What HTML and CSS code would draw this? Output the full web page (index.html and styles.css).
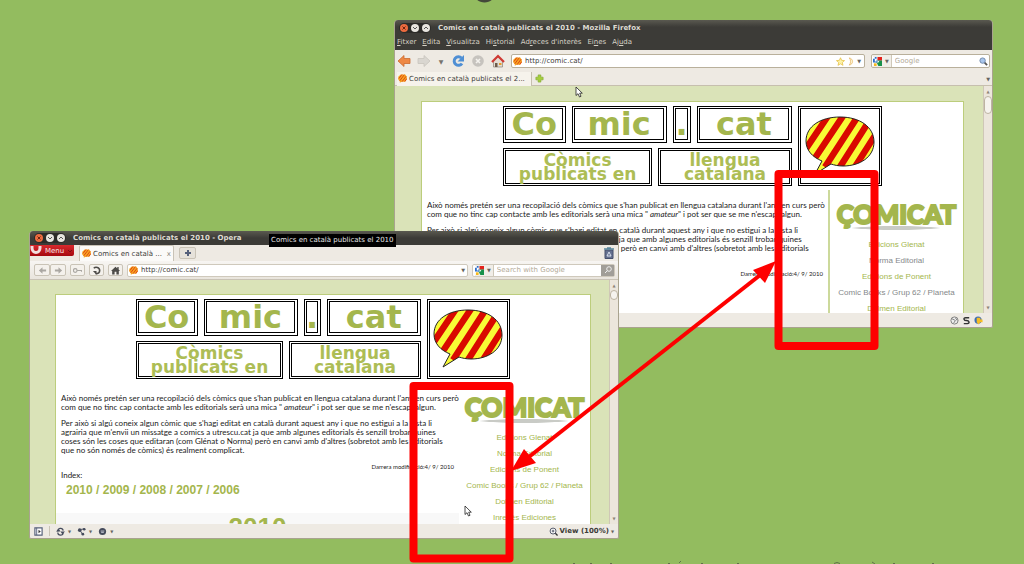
FILE: index.html
```html
<!DOCTYPE html>
<html lang="ca">
<head>
<meta charset="utf-8">
<title>Comics en català publicats el 2010</title>
<link rel="stylesheet" href="styles.css">
</head>
<body>
<svg class="defs" aria-hidden="true">
  <defs>
    <clipPath id="bubble-clip"><path d="M35 1C55 1 69 11 69 26C69 41 55 50 38 50C33 50 29 49 26 48L10 58L17 45C7 41 1 34 1 25C1 10 16 1 35 1Z"/></clipPath>
    <symbol id="bubble" viewBox="0 0 70 60">
      <g clip-path="url(#bubble-clip)">
        <rect width="70" height="60" fill="#f8fb35"/>
        <path d="M25-3L-4 40M40-3L6 48M55-3L20 51M66 2L33 54M76 10L48 54" stroke="#d90900" stroke-width="6.500"/>
      </g>
      <path d="M35 1C55 1 69 11 69 26C69 41 55 50 38 50C33 50 29 49 26 48L10 58L17 45C7 41 1 34 1 25C1 10 16 1 35 1Z" fill="none" stroke="#222" stroke-width="1"/>
    </symbol>
    <symbol id="fav" viewBox="0 0 10 10">
      <path d="M3 .5H8L9.800 3V6L8 8.500H4L2 9.800V8L.3 6V3Z" fill="#f5a81c"/>
      <path d="M4.500.5L1 5M7 .8L2 7.500M9 2.500L4.500 8.500M9.800 5L7.500 8.300" stroke="#e0401c" stroke-width="1.100"/>
    </symbol>
    <symbol id="google" viewBox="0 0 10 10">
      <path d="M0 0H4V10H0Z" fill="#fff"/><path d="M5 0H10V4H5Z" fill="#e3221c"/><path d="M5 4H10V10H6L4 6Z" fill="#17914a"/>
      <path d="M2 0H4V2H2ZM0 2H2V5H4V3H5V6H0Z" fill="#2f6fc9"/><path d="M1 7H4V10H1Z" fill="#f6b91d"/><path d="M5 4L7 5L5 7Z" fill="#fff"/>
    </symbol>
    <symbol id="lens" viewBox="0 0 10 10"><path d="M6 6L9 9" stroke="#555" stroke-width="2"/><circle cx="4" cy="4" r="3" fill="#a9c6ec" stroke="#6d86a8"/></symbol>
    <symbol id="pointer" viewBox="0 0 8 12"><path d="M1 1V9.500L3 7.700L4.500 11L6 10.300L4.700 7.200H7.300Z" fill="#fff" stroke="#222" stroke-width=".8"/></symbol>
  </defs>
</svg>

<main class="desktop">
  <section class="window firefox" aria-label="Mozilla Firefox">
    <header class="chrome-top">
      <div class="titlebar">
        <span class="controls"><button class="dot close" aria-label="Tanca"><svg viewBox="0 0 8 8"><path d="M2.500 2.500L5.500 5.500M5.500 2.500L2.500 5.500"/></svg></button><button class="dot" aria-label="Minimitza"><svg viewBox="0 0 8 8"><path d="M2 3L4 5L6 3"/></svg></button><button class="dot" aria-label="Maximitza"><svg viewBox="0 0 8 8"><path d="M2 5L4 3L6 5"/></svg></button></span>
        <h1 class="title">Comics en català publicats el 2010 - Mozilla Firefox</h1>
      </div>
      <nav class="menubar">
        <a href="#"><u>F</u>itxer</a><a href="#"><u>E</u>dita</a><a href="#"><u>V</u>isualitza</a><a href="#">Hi<u>s</u>torial</a><a href="#">Ad<u>r</u>eces d'interès</a><a href="#">Ei<u>n</u>es</a><a href="#">Aj<u>u</u>da</a>
      </nav>
    </header>
    <div class="toolbar">
      <button class="tool" aria-label="Enrere"><svg viewBox="0 0 14 14"><path d="M1 7L7 1.500V4.500H13V9.500H7V12.500Z" fill="#ee8843" stroke="#c9692f" stroke-width=".8"/></svg></button>
      <button class="tool" aria-label="Endavant"><svg viewBox="0 0 14 14"><path d="M13 7L7 1.500V4.500H1V9.500H7V12.500Z" fill="#d9d6d0" stroke="#c8c4bd" stroke-width=".8"/></svg></button>
      <button class="tool small" aria-label="Historial recent">▼</button>
      <button class="tool" aria-label="Recarrega"><svg viewBox="0 0 14 14"><path d="M10.500 4A4.300 4.300 0 1 0 11 9.500" fill="none" stroke="#4f8fd4" stroke-width="3"/><path d="M13 1V7.500H6.500Z" fill="#4f8fd4"/></svg></button>
      <button class="tool" aria-label="Atura"><svg viewBox="0 0 14 14"><circle cx="7" cy="7" r="5.800" fill="#c6c3be"/><path d="M5 5L9 9M9 5L5 9" stroke="#f4f2ee" stroke-width="1.600"/></svg></button>
      <button class="tool" aria-label="Inici"><svg viewBox="0 0 14 14"><path d="M2.500 7V13H11.500V7L7 3Z" fill="#e4ddd2" stroke="#8a8176" stroke-width=".7"/><path d="M1 8L7 2L13 8" fill="none" stroke="#cf3a34" stroke-width="2.200"/><path d="M4 9H6.500V13H4Z" fill="#6d5b4b"/><path d="M8 9H10.500V11H8Z" fill="#e79a2d"/></svg></button>
      <div class="field address">
        <svg class="ico"><use href="#fav"/></svg>
        <input aria-label="Adreça" value="http://comic.cat/">
        <svg class="ico" viewBox="0 0 10 10"><path d="M5 .8L6.300 3.700L9.500 4L7 6.200L7.800 9.300L5 7.600L2.200 9.300L3 6.200L.5 4L3.700 3.700Z" fill="#fdf3a8" stroke="#e3bc3e" stroke-width=".8"/></svg>
        <svg class="ico thin" viewBox="0 0 6 10"><path d="M1 1C6 2 6 8 1 9C3 7 3 3 1 1Z" fill="#fff4d0" stroke="#e3b25e" stroke-width=".8"/></svg>
        <span class="arrow">▼</span>
      </div>
      <div class="field search">
        <span class="engine"><svg class="ico"><use href="#google"/></svg><span class="arrow">▼</span></span>
        <input aria-label="Cerca" placeholder="Google">
        <svg class="ico"><use href="#lens"/></svg>
      </div>
    </div>
    <div class="tabs">
      <button class="tab"><svg class="ico"><use href="#fav"/></svg>Comics en català publicats el 2...</button>
      <button class="newtab" aria-label="Pestanya nova"><svg class="ico" viewBox="0 0 10 10"><path d="M3.500 1H6.500V3.500H9V6.500H6.500V9H3.500V6.500H1V3.500H3.500Z" fill="#a5cf3c" stroke="#7fa82c" stroke-width=".7"/></svg></button>
      <span class="arrow end">▼</span>
    </div>
    <div class="view">
      <div class="canvas">
        <article class="page">
          <div class="logo">
            <div class="row top"><b class="box">Co</b><b class="box">mic</b><b class="box">.</b><b class="box">cat</b></div>
            <div class="row sub"><b class="box">Còmics<br>publicats en</b><b class="box">llengua<br>catalana</b></div>
            <div class="box pic"><svg><use href="#bubble"/></svg></div>
          </div>
          <div class="cols">
            <div class="text">
              <p>Això només pretén ser una recopilació dels còmics que s'han publicat en llengua catalana durant l'any en curs però<br>com que no tinc cap contacte amb les editorials serà una mica " <i>amateur</i>" i pot ser que se me n'escapi algun.</p>
              <p>Per això si algú coneix algun còmic que s'hagi editat en català durant aquest any i que no estigui a la llista li<br>agrairia que m'envii un missatge a comics a utrescu.cat ja que amb algunes editorials és senzill trobar quines<br>coses són les coses que editaran (com Glénat o Norma) però en canvi amb d'altres (sobretot amb les editorials<br>que no són només de còmics) és realment complicat.</p>
              <p class="date">Darrera modificació:4/ 9/ 2010</p>
            </div>
            <aside class="side">
              <div class="brand">ÇOMICAT</div>
              <a href="#">Edicions Glenat</a><a class="seen" href="#">Norma Editorial</a><a href="#">Edicions de Ponent</a><a class="seen" href="#">Comic Books / Grup 62 / Planeta</a><a href="#">Dolmen Editorial</a>
            </aside>
          </div>
        </article>
      </div>
      <div class="scroll"><span>▲</span><i class="thumb"></i><span class="down">▼</span></div>
    </div>
    <footer class="status right">
      <svg class="ico" viewBox="0 0 10 10"><circle cx="5" cy="5" r="4" fill="#eee" stroke="#777"/><path d="M2 3L6 5L4 8M6 2L8 5" fill="none" stroke="#777"/></svg>
      <svg class="ico" viewBox="0 0 10 10"><path d="M8 2H4C1 2 2 5 5 5S9 8 6 8.500H2" fill="none" stroke="#333" stroke-width="1.600"/></svg>
      <svg class="ico" viewBox="0 0 10 10"><circle cx="4.500" cy="4.500" r="4" fill="#3d6fb5"/><path d="M3 2H7V4H9.500V7H7L5 9.500L3 7Z" fill="#f6bd25"/></svg>
    </footer>
  </section>

  <section class="window opera" aria-label="Opera">
    <header class="chrome-top">
      <div class="titlebar">
        <span class="controls"><button class="dot close" aria-label="Tanca"><svg viewBox="0 0 8 8"><path d="M2.500 2.500L5.500 5.500M5.500 2.500L2.500 5.500"/></svg></button><button class="dot" aria-label="Minimitza"><svg viewBox="0 0 8 8"><path d="M2 3L4 5L6 3"/></svg></button><button class="dot" aria-label="Maximitza"><svg viewBox="0 0 8 8"><path d="M2 5L4 3L6 5"/></svg></button></span>
        <h1 class="title">Comics en català publicats el 2010 - Opera</h1>
      </div>
    </header>
    <div class="tabs">
      <button class="menu"><svg viewBox="0 0 12 10"><path d="M2 -2V2A4 4.500 0 0 0 10 2V-2" fill="none" stroke="#f2dede" stroke-width="3"/></svg>Menu<svg class="chev" viewBox="0 0 6 4"><path d="M1 1L3 3L5 1" fill="none" stroke="#7c1015"/></svg></button>
      <button class="tab"><svg class="ico"><use href="#fav"/></svg>Comics en català ...<span class="x">x</span></button>
      <button class="plus" aria-label="Pestanya nova"><svg viewBox="0 0 8 8"><path d="M4 1V7M1 4H7" stroke="#55607a" stroke-width="2"/></svg></button>
      <svg class="trash" viewBox="0 0 10 12"><path d="M1 3H9V11.500H1Z" fill="#64708f" stroke="#444f6b"/><path d="M0 2H10M3 1H7" stroke="#59869c" stroke-width="1.500"/><path d="M3 9L5 5L7 9Z" fill="none" stroke="#d9e0ee"/></svg>
    </div>
    <div class="toolbar">
      <div class="pair"><button class="btn" aria-label="Enrere"><svg viewBox="0 0 10 10"><path d="M1 5L5 1.500V4H9V6H5V8.500Z" fill="#aaa7a2"/></svg></button><button class="btn" aria-label="Endavant"><svg viewBox="0 0 10 10"><path d="M9 5L5 1.500V4H1V6H5V8.500Z" fill="#aaa7a2"/></svg></button></div>
      <button class="btn" aria-label="Clau"><svg viewBox="0 0 10 10"><circle cx="2.500" cy="5" r="2" fill="none" stroke="#aaa7a2" stroke-width="1.300"/><path d="M4.500 5H9.500V6.500" fill="none" stroke="#aaa7a2" stroke-width="1.300"/></svg></button>
      <button class="btn" aria-label="Recarrega"><svg viewBox="0 0 10 10"><path d="M2 2.500C4 .5 8.500 1.500 8.500 5C8.500 8 6 8.500 4 8.500" fill="none" stroke="#4d4b48" stroke-width="1.800"/><path d="M1 5.500H5V9.800Z" fill="#4d4b48"/></svg></button>
      <button class="btn" aria-label="Inici"><svg viewBox="0 0 10 10"><path d="M0 5.500L5 .8L7 2.700V1H8.500V4L10 5.500H8.700V9.500H6V6.500H4V9.500H1.300V5.500Z" fill="#4d4b48"/></svg></button>
      <div class="field address">
        <svg class="ico"><use href="#fav"/></svg>
        <input aria-label="Adreça" value="http://comic.cat/">
        <span class="arrow">▼</span>
      </div>
      <div class="field search">
        <span class="engine"><svg class="ico"><use href="#google"/></svg><span class="arrow">▼</span></span>
        <input aria-label="Cerca" placeholder="Search with Google">
        <button class="go" aria-label="Cerca"><svg viewBox="0 0 10 10"><circle cx="6" cy="4" r="2.300" fill="none" stroke="#eee"/><path d="M4.500 5.500L2 8" stroke="#eee"/></svg></button>
      </div>
    </div>
    <div class="view">
      <div class="canvas">
        <article class="page">
          <div class="logo">
            <div class="row top"><b class="box">Co</b><b class="box">mic</b><b class="box">.</b><b class="box">cat</b></div>
            <div class="row sub"><b class="box">Còmics<br>publicats en</b><b class="box">llengua<br>catalana</b></div>
            <div class="box pic"><svg><use href="#bubble"/></svg></div>
          </div>
          <div class="cols">
            <div class="text">
              <p>Això només pretén ser una recopilació dels còmics que s'han publicat en llengua catalana durant l'any en curs però<br>com que no tinc cap contacte amb les editorials serà una mica " <i>amateur</i>" i pot ser que se me n'escapi algun.</p>
              <p>Per això si algú coneix algun còmic que s'hagi editat en català durant aquest any i que no estigui a la llista li<br>agrairia que m'envii un missatge a comics a utrescu.cat ja que amb algunes editorials és senzill trobar quines<br>coses són les coses que editaran (com Glénat o Norma) però en canvi amb d'altres (sobretot amb les editorials<br>que no són només de còmics) és realment complicat.</p>
              <p class="date">Darrera modificació:4/ 9/ 2010</p>
              <p class="index">Index:</p>
              <p class="years"><a href="#">2010</a> / <a href="#">2009</a> / <a href="#">2008</a> / <a href="#">2007</a> / <a href="#">2006</a></p>
              <h2 class="year">2010</h2>
            </div>
            <aside class="side">
              <div class="brand">ÇOMICAT</div>
              <a href="#">Edicions Glenat</a><a href="#">Norma Editorial</a><a href="#">Edicions de Ponent</a><a href="#">Comic Books / Grup 62 / Planeta</a><a href="#">Dolmen Editorial</a><a href="#">Inrevés Ediciones</a>
            </aside>
          </div>
        </article>
      </div>
      <div class="scroll"><span>▲</span><i class="thumb"></i><span class="down">▼</span></div>
    </div>
    <footer class="status">
      <svg class="ico" viewBox="0 0 10 10"><path d="M1 1H9V9H1Z" fill="#fff" stroke="#56607a" stroke-width="1.300"/><path d="M3 1V9" stroke="#56607a"/><path d="M5 3L7.500 5L5 7Z" fill="#333"/></svg>
      <i class="sep"></i>
      <svg class="ico" viewBox="0 0 10 10"><path d="M0 5L3 2L5 5ZM10 5L7 8L5 5Z" fill="#454b5c"/><path d="M2 5A3 3 0 0 1 8 4M2 6A3 3 0 0 0 8 6" fill="none" stroke="#454b5c" stroke-width="1.300"/></svg><span class="arrow">▼</span>
      <svg class="ico" viewBox="0 0 10 10"><path d="M3 3L8 2M3 3L6 8" stroke="#454b5c"/><circle cx="3" cy="3.500" r="2" fill="#454b5c"/><circle cx="8" cy="2.500" r="1.500" fill="#454b5c"/><circle cx="6.500" cy="8" r="1.500" fill="#454b5c"/></svg><span class="arrow">▼</span>
      <svg class="ico" viewBox="0 0 10 10"><circle cx="5" cy="5" r="4" fill="#454b5c"/><path d="M3 4.500H7M3.500 6H6.500" stroke="#c8ccd8"/></svg><span class="arrow">▼</span>
      <button class="zoom"><svg class="ico" viewBox="0 0 10 10"><path d="M6.500 6.500L9.500 9.500" stroke="#333" stroke-width="1.500"/><circle cx="4.500" cy="4.500" r="3.300" fill="#fff" stroke="#454b5c"/><path d="M3 4.500H6M4.500 3V6" stroke="#454b5c"/></svg>View (100%)<span class="arrow">▼</span></button>
    </footer>
    <span class="tooltip" role="tooltip">Comics en català publicats el 2010</span>
  </section>

  <svg class="marks" viewBox="0 0 1024 564" aria-hidden="true">
    <path d="M476 -2C478 4 491 4 493 -2Z" fill="#43483a"/>
    <path d="M573 563.500h2M590 563.500h2M610 563.500h2M668 563.500h2M679 563l2-2M701 563.500h2M737 563.500h2M834 563.500q3-2 6 0M872 562l3 2M893 563.500h2M932 563.500h2" fill="none" stroke="#5e7048"/>
    <use href="#pointer" x="575" y="86" width="8" height="12"/>
    <use href="#pointer" x="464" y="505" width="8" height="12"/>
    <g fill="none" stroke="#fe0000" stroke-linejoin="round">
      <rect x="778.500" y="174" width="96" height="172" stroke-width="8"/>
      <rect x="413.500" y="386" width="96" height="172.500" stroke-width="8"/>
      <path d="M525 460L764 272" stroke-width="4"/>
    </g>
    <path d="M776 261L753 270L765 283ZM511 471L524 449L536 463Z" fill="#fe0000"/>
  </svg>
</main>
</body>
</html>
```
FILE: styles.css
```css
* { box-sizing: border-box; }
body { margin: 0; background: #93bc5f; font-family: "DejaVu Sans", sans-serif; font-size: 7px; color: #3c3b37; }
button, input { font: inherit; color: inherit; border: 0; padding: 0; margin: 0; background: none; }
button { display: flex; align-items: center; }
a { color: inherit; text-decoration: none; }
h1, h2, p { margin: 0; font-size: inherit; }
.defs { position: absolute; width: 0; height: 0; }
.desktop { position: relative; min-height: 100vh; overflow: hidden; }
.marks { position: absolute; left: 0; top: 0; width: 1024px; height: 564px; pointer-events: none; }

.window { position: absolute; display: flex; flex-direction: column; background: #eeeae3; border: 1px solid #a9a38f; border-top: 0; border-radius: 4px 4px 2px 2px; }
.firefox { left: 394px; top: 20px; width: 599px; height: 308px; }
.opera { left: 29px; top: 231px; width: 590px; height: 308px; }

.chrome-top { background: linear-gradient(#5a5950, #3c3b37 7px); color: #dfdbd2; border-radius: 3px 3px 0 0; }
.titlebar { display: flex; align-items: center; gap: 7px; height: 15px; padding: 0 4px; }
.opera .titlebar { height: 14px; }
.title { font-weight: bold; white-space: nowrap; }
.controls { display: flex; align-items: center; gap: 3px; padding: 1px; border-radius: 6px; background: #2c2b28; }
.dot { width: 8px; height: 8px; border-radius: 50%; background: #e8e5df; }
.dot svg { width: 8px; height: 8px; fill: none; stroke: #555; }
.close { background: #ec6b3f; }
.close svg { stroke: #6b2410; }
.menubar { display: flex; gap: 6px; height: 15px; padding: 0 2px; line-height: 14px; white-space: nowrap; color: #d6d1c6; }

.toolbar { display: flex; align-items: center; gap: 6px; height: 22px; padding: 0 2px; }
.tool svg { width: 14px; height: 14px; display: block; }
.small { width: 8px; justify-content: center; color: #77736c; font-size: 6px; }
.field { display: flex; align-items: center; gap: 3px; height: 14px; padding: 0 3px; background: #fff; border: 1px solid #b9b09b; border-radius: 2px; }
.field input { flex: 1; min-width: 0; outline: 0; }
.field input::placeholder { color: #b3aa98; opacity: 1; }
.address { flex: 1; }
.firefox .toolbar .address { padding-left: 1px; }
.ico { width: 9px; height: 9px; flex: none; }
.thin { width: 6px; }
.arrow { font-size: 5px; color: #67645e; }
.engine { display: flex; align-items: center; gap: 3px; height: 100%; padding-right: 2px; border-right: 1px solid #cfc8b8; background: #f1eee8; }
.firefox .search { width: 119px; padding: 0 1px; }

.tabs { display: flex; align-items: center; height: 14px; padding: 0 2px; white-space: nowrap; }
.firefox .tabs { border-bottom: 1px solid #c6bfae; }
.tab { gap: 2px; }
.firefox .tab { width: 135px; height: 14px; padding-left: 1px; background: #f6f3ec; border-right: 1px solid #c6bfae; }
.newtab { margin-left: 3px; }
.end { margin-left: auto; }

.opera .tabs { height: 16px; padding: 0; gap: 5px; }
.menu { align-self: flex-start; height: 11px; width: 44px; background: linear-gradient(#d92a2e, #a5080f); color: #f8e6e6; gap: 3px; border-radius: 0 0 2px 0; }
.menu svg { width: 12px; height: 10px; }
.menu .chev { width: 6px; height: 4px; }
.opera .tab { align-self: stretch; width: 95px; background: #fbfaf8; border: 1px solid #c9c3b6; border-bottom: 0; border-radius: 2px 2px 0 0; padding: 0 2px; }
.x { margin-left: auto; color: #8c8880; }
.plus { width: 17px; height: 12px; justify-content: center; border: 1px solid #c9c3b6; border-radius: 2px; background: #e6e2da; }
.plus svg { width: 8px; height: 8px; }
.trash { width: 10px; height: 12px; margin: 0 4px 0 auto; }
.opera .toolbar { height: 19px; gap: 4px; padding: 0 3px 0 4px; border-bottom: 1px solid #c9c3b6; background: linear-gradient(#f7f5f2, #e9e5dd); }
.pair { display: flex; }
.btn { width: 15px; height: 12px; justify-content: center; border: 1px solid #c9c3b6; border-radius: 2px; background: #f4f1ec; }
.pair .btn { width: 16px; }
.btn svg { width: 9px; height: 9px; }
.opera .field { height: 13px; border-color: #cfc9bc; padding: 0 2px 0 1px; }
.opera .field.search { width: 143px; padding: 0 0 0 2px; }
.go { width: 13px; height: 100%; background: #a19e98; justify-content: center; }
.go svg { width: 10px; height: 10px; }

.view { display: flex; flex: 1; min-height: 0; overflow: hidden; }
.canvas { flex: 1; min-width: 0; padding: 15px 19px 0 26px; background: #dae3b8; }
.opera .canvas { padding: 14px 18px 0 25px; }
.scroll { display: flex; flex-direction: column; align-items: center; gap: 2px; width: 9px; background: #ece6dc; border-left: 1px solid #cfc7b6; font-size: 4px; color: #8c8576; padding: 3px 0; }
.thumb { width: 8px; height: 18px; border: 1px solid #bdb4a2; border-radius: 4px; background: #f6f3ee; }
.opera .thumb { height: 10px; }
.down { margin-top: auto; }
.page { min-height: 300px; background: #fff; border: 1px solid #bccd7c; }
.logo { display: grid; grid-template-columns: 289fr 84fr; grid-template-rows: 36px 38px; gap: 6px; width: 70%; margin: 0 auto; padding-top: 4px; }
.row { display: grid; gap: 6px; grid-column: 1; min-width: 0; }
.box { display: flex; align-items: center; justify-content: center; min-width: 0; border: 3px double #000; text-align: center; white-space: nowrap; color: #a4b64d; }
.top { grid-template-columns: 63fr 95fr 18fr 95fr; font-size: 32px; line-height: 30px; }
.top .box { border-right-width: 4px; border-bottom-width: 4px; }
.sub { grid-template-columns: 149fr 134fr; font-size: 17px; line-height: 14px; }
.sub .box { color: #adbd55; }
.pic { grid-column: 2; grid-row: 1 / 3; }
.pic svg { width: 72px; height: 60px; }

.cols { display: flex; margin-top: 4px; font-family: "Liberation Sans", Arial, sans-serif; font-size: 8px; }
.text { flex: 1; min-width: 0; padding: 11px 0 0; line-height: 9px; white-space: nowrap; color: #222; }
.text p { padding: 0 5px; margin-bottom: 7px; font-family: Lato, "Liberation Sans", sans-serif; }
.text .date { font-size: 6px; text-align: right; margin: 0; }
.text .index { margin: 0; }
.text .years { padding: 0 10px; margin: 3px 0 16px; font-family: "Liberation Sans", Arial, sans-serif; font-size: 12px; line-height: 14px; font-weight: bold; color: #a4b64d; }
.year { background: #f8f8f8; font-size: 26px; line-height: 28px; text-align: center; color: #a4b64d; }
.side { display: flex; flex-direction: column; width: 131px; text-align: center; line-height: 16px; white-space: nowrap; color: #a4b64d; }
.firefox .side { width: 135px; border-left: 2px solid #ccd99b; }
.brand { align-self: center; height: 47px; padding-top: 8px; font-family: Lato, sans-serif; font-weight: 900; font-size: 26px; line-height: 32px; -webkit-text-stroke: 2px #a4b64d; background: radial-gradient(closest-side, #c9cbc6 80%, #fff) center 36px / 92px 4px no-repeat; }
.seen { color: #85888a; }

.status { display: flex; align-items: center; gap: 3px; height: 14px; padding: 0 4px; }
.right { justify-content: flex-end; padding-right: 9px; }
.sep { width: 1px; height: 10px; margin: 0 3px; background: #c9c3b6; }
.zoom { margin-left: auto; gap: 2px; font-weight: bold; }
.status .arrow { font-size: 4px; margin-right: 3px; }
.status .zoom .arrow { margin-right: 0; }
.tooltip { position: absolute; left: 239px; top: 3px; padding: 0 2px; line-height: 13px; background: #000; color: #e6e6e6; white-space: nowrap; }
```
